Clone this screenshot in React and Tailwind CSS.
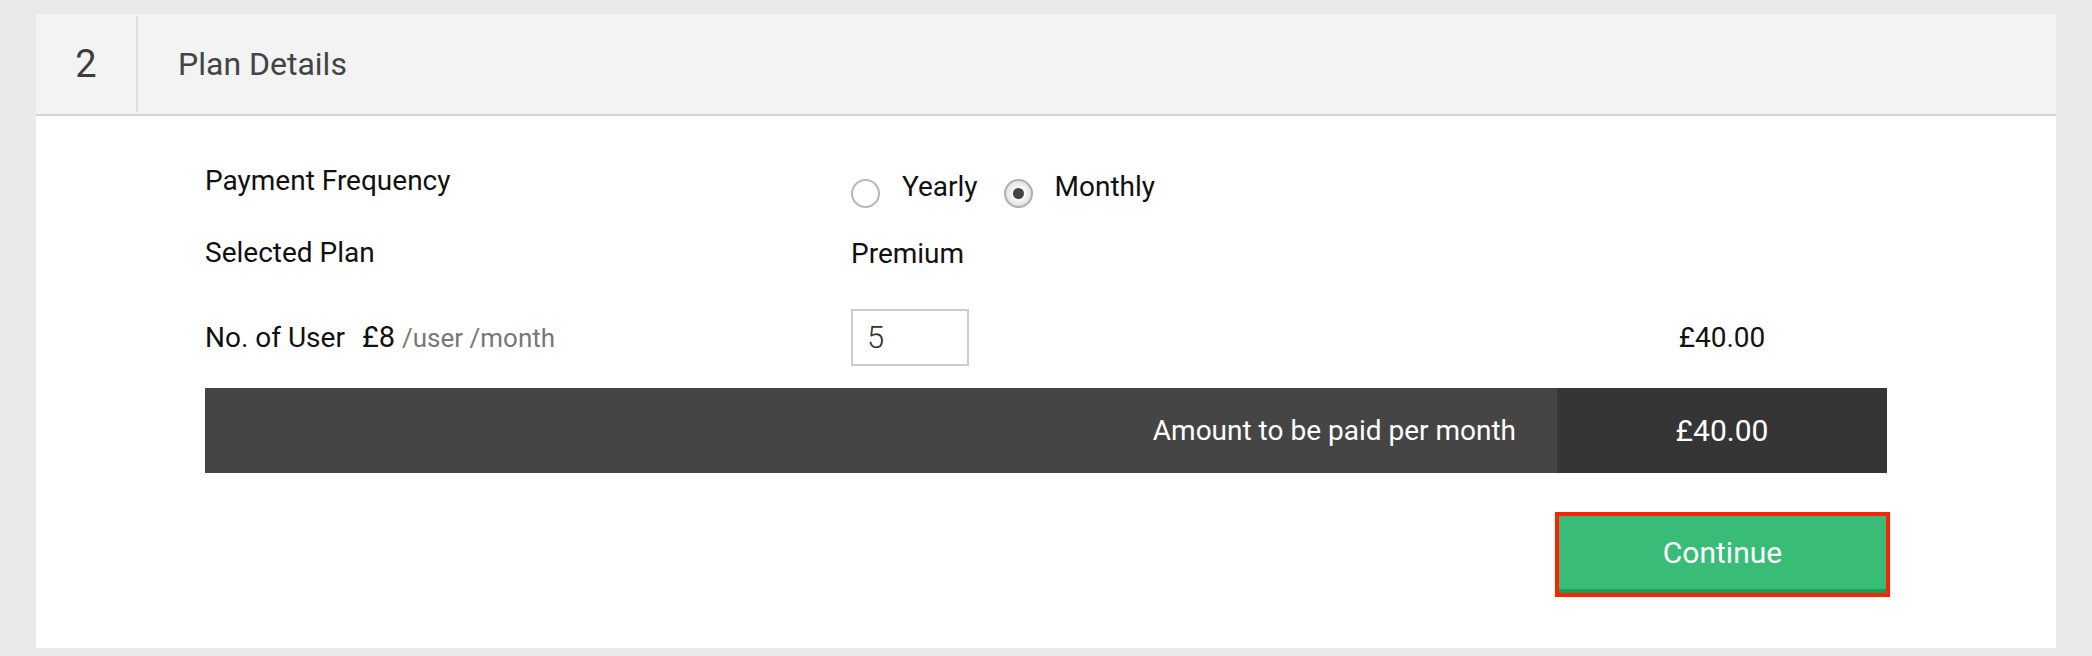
import React, { useState } from 'react';

function Radio({ checked, label, onClick }) {
  return (
    <button type="button" onClick={onClick} className="flex items-start cursor-pointer">
      {checked ? (
        <span className="mt-[8px] w-[29px] h-[29px] rounded-full border-2 border-[#b0b0b0] bg-[radial-gradient(circle,#ffffff_25%,#d0d0d0_100%)] flex items-center justify-center">
          <span className="w-[11px] h-[11px] rounded-full bg-[#444444]" />
        </span>
      ) : (
        <span className="mt-[8px] w-[29px] h-[29px] rounded-full border-2 border-[#b8b8b8] bg-white" />
      )}
      <span className="ml-[22px] text-[28px] leading-[32px] text-[#111]">{label}</span>
    </button>
  );
}

export default function App() {
  const [frequency, setFrequency] = useState('monthly');
  const [users, setUsers] = useState('5');
  const price = 8;
  const total = `£${(price * (parseInt(users, 10) || 0)).toFixed(2)}`;

  return (
    <div className="min-h-screen bg-[#e9e9e9] pt-[14px] px-[36px] pb-[8px] font-['Roboto',sans-serif]">
      <div className="bg-white">
        {/* header */}
        <div className="flex h-[102px] bg-[#f3f3f3] border-b-2 border-[#d4d4d4]">
          <div className="w-[102px] my-[2px] border-r-2 border-[#dcdcdc] flex items-center justify-center text-[38px] text-[#3d3d3d]">
            2
          </div>
          <div className="flex items-center pl-[40px] text-[32px] text-[#444]">Plan Details</div>
        </div>

        {/* body */}
        <div className="pt-[49px] px-[169px] pb-[55px] text-[28px] leading-[32px] text-[#111]">
          <div className="flex items-start h-[32px]">
            <div className="w-[646px]">Payment Frequency</div>
            <div className="mt-[6px] flex items-start gap-[26px]">
              <Radio label="Yearly" checked={frequency === 'yearly'} onClick={() => setFrequency('yearly')} />
              <Radio label="Monthly" checked={frequency === 'monthly'} onClick={() => setFrequency('monthly')} />
            </div>
          </div>

          <div className="mt-[40px] flex items-start">
            <div className="w-[646px]">Selected Plan</div>
            <div className="mt-[1px]">Premium</div>
          </div>

          <div className="mt-[39px] flex items-center h-[57px]">
            <div className="w-[646px] flex items-baseline">
              <span>No. of User</span>
              <span className="ml-[17px] text-[29px]">£8</span>
              <span className="ml-[7px] text-[26px] text-[#777]">/user /month</span>
            </div>
            <input
              value={users}
              onChange={(e) => setUsers(e.target.value)}
              className="w-[118px] h-[57px] border-2 border-[#cccccc] pl-[14px] text-[31px] font-light text-[#333] outline-none"
            />
            <div className="flex-1" />
            <div className="w-[330px] text-center">{total}</div>
          </div>

          <div className="mt-[22px] flex h-[85px] text-white">
            <div className="flex-1 bg-[#454545] flex items-center justify-end pr-[41px]">
              Amount to be paid per month
            </div>
            <div className="w-[330px] bg-[#353535] flex items-center justify-center text-[30px]">
              {total}
            </div>
          </div>

          <div className="mt-[43px] flex justify-end">
            <button className="mr-px w-[327px] h-[77px] bg-[#38bc78] border-b-4 border-[#15a05b] outline-4 outline-solid outline-[#ff2200] text-white text-[30px]">
              Continue
            </button>
          </div>
        </div>
      </div>
    </div>
  );
}
